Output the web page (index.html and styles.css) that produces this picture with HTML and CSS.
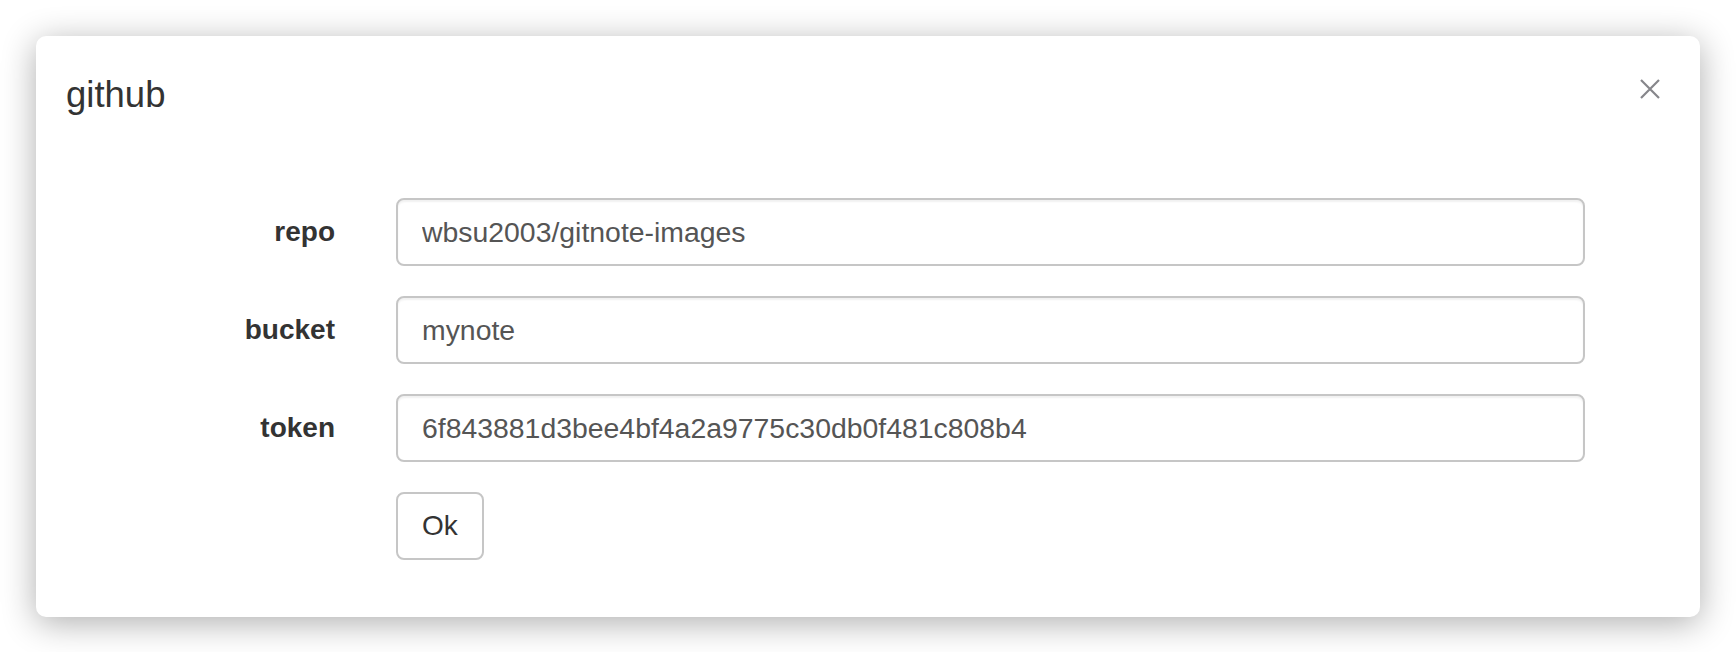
FILE: index.html
```html
<!DOCTYPE html>
<html>
<head>
<meta charset="utf-8">
<title>github</title>
<link rel="stylesheet" href="styles.css">
</head>
<body>
<div class="modal">
  <div class="modal-header">
    <h4 class="modal-title">github</h4>
    <button class="close" type="button" aria-label="Close">
      <svg width="20" height="20" viewBox="0 0 20 20"><path d="M1 1 L19 19 M19 1 L1 19" stroke="#86868b" stroke-width="2.2" fill="none"/></svg>
    </button>
  </div>
  <div class="modal-body">
    <form class="form">
      <label class="label">repo</label>
      <input class="input" type="text" value="wbsu2003/gitnote-images">
      <label class="label">bucket</label>
      <input class="input" type="text" value="mynote">
      <label class="label">token</label>
      <input class="input" type="text" value="6f843881d3bee4bf4a2a9775c30db0f481c808b4">
      <span class="spacer"></span>
      <div class="actions"><button class="btn" type="button">Ok</button></div>
    </form>
  </div>
</div>
</body>
</html>
```

FILE: styles.css
```css
html, body {
  margin: 0;
  padding: 0;
  background: #ffffff;
}
body {
  padding: 36px;
  font-family: "Helvetica Neue", "Liberation Sans", Arial, sans-serif;
  color: #333;
}
.modal {
  width: 1664px;
  box-sizing: border-box;
  background: #fff;
  border-radius: 10px;
  box-shadow: 0 6px 34px rgba(0, 0, 0, 0.32);
}
.modal-header {
  display: flex;
  justify-content: space-between;
  align-items: flex-start;
  padding: 33px 30px 0 30px;
  height: 112px;
  box-sizing: border-box;
}
.modal-title {
  margin: 0;
  font-size: 36.5px;
  font-weight: 400;
  line-height: 51px;
  color: #333;
}
.close {
  border: 0;
  background: transparent;
  padding: 0;
  margin: 10px 10px 0 0;
  width: 20px;
  height: 20px;
  display: flex;
}
.modal-body {
  padding: 50px 115px 57px 30px;
}
.form {
  display: grid;
  grid-template-columns: 269px 1fr;
  column-gap: 61px;
  row-gap: 30px;
  align-items: center;
}
.label {
  text-align: right;
  font-size: 28px;
  font-weight: 700;
  color: #333;
}
.input {
  height: 68px;
  box-sizing: border-box;
  border: 2px solid #c6c6c6;
  border-radius: 8px;
  padding: 0 24px;
  font-family: "Helvetica Neue", "Liberation Sans", Arial, sans-serif;
  font-size: 28.4px;
  color: #555;
  background: #fff;
  box-shadow: inset 0 2px 2px rgba(0, 0, 0, 0.06);
  outline: none;
  width: 100%;
}
.actions {
  display: flex;
}
.btn {
  height: 68px;
  box-sizing: border-box;
  padding: 0 24px;
  border: 2px solid #c6c6c6;
  border-radius: 8px;
  background: #fff;
  font-family: "Helvetica Neue", "Liberation Sans", Arial, sans-serif;
  font-size: 28px;
  color: #333;
}
```
